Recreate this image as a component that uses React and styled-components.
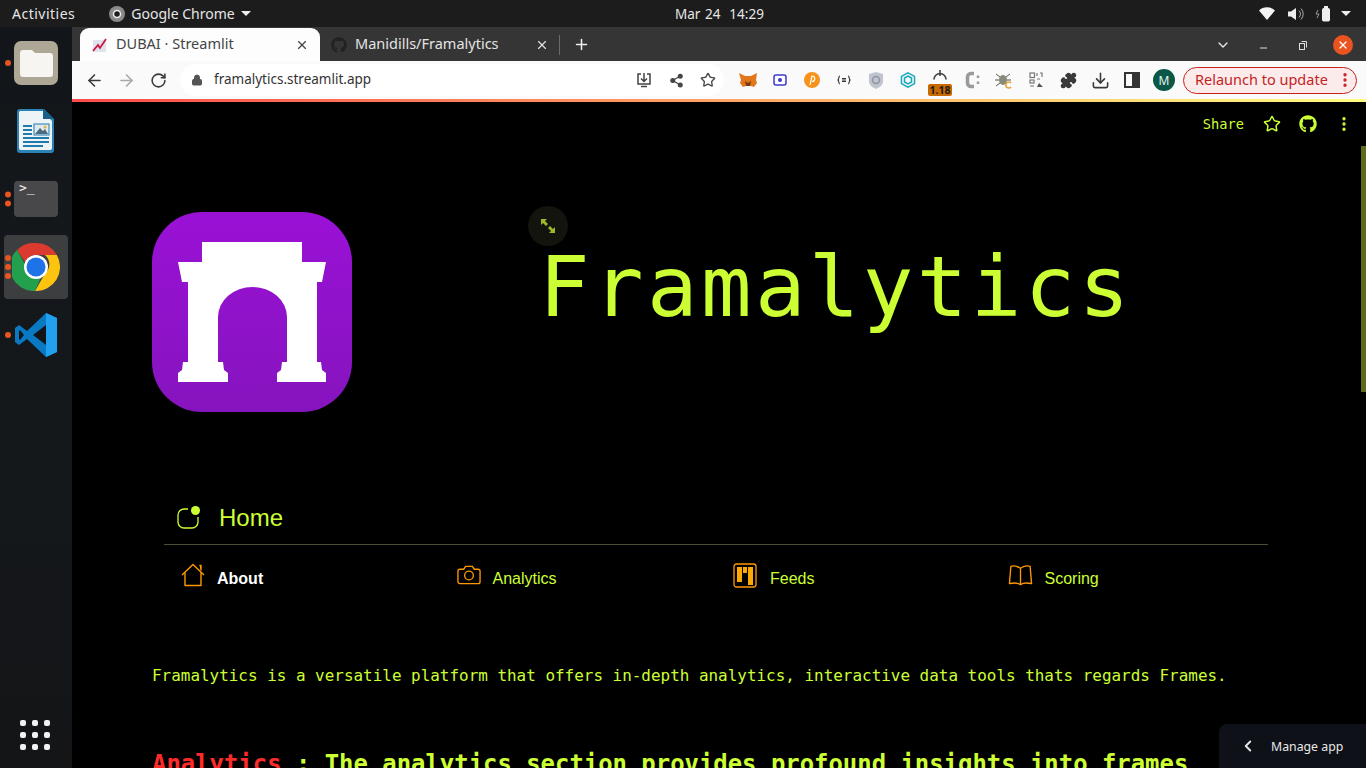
import React from "react";
import styled, { createGlobalStyle } from "styled-components";
import {
  ArrowLeft,
  ArrowRight,
  RotateCw,
  Lock,
  Share2,
  Star,
  Plus,
  X,
  ChevronDown,
  ChevronLeft,
  Download,
  Puzzle,
  MoreVertical,
} from "lucide-react";
import { FaGithub } from "react-icons/fa";

const lime = "#ccff33";
const amber = "#ff9900";
const uiFont = `"Noto Sans", "Open Sans", sans-serif`;
const monoFont = `"DejaVu Sans Mono", "Liberation Mono", monospace`;

const GlobalStyle = createGlobalStyle`
  html, body {
    margin: 0;
    padding: 0;
    height: 100%;
    overflow: hidden;
    background: #000;
  }
  * { box-sizing: border-box; }
`;

const Screen = styled.div`
  width: 1366px;
  height: 768px;
  display: flex;
  flex-direction: column;
  overflow: hidden;
  font-family: ${uiFont};
`;

const TopBar = styled.header`
  height: 27px;
  flex: none;
  display: flex;
  align-items: center;
  background: #1c1c1c;
  color: #e6e6e6;
  font-size: 14px;
`;

const TopLeft = styled.div`
  width: 675px;
  padding-left: 12px;
  display: flex;
  align-items: center;
`;

const Activities = styled.span`
  letter-spacing: 0.5px;
`;

const AppMenu = styled.div`
  margin-left: 34px;
  display: flex;
  align-items: center;
  gap: 6px;
`;

const Caret = styled.span`
  width: 0;
  height: 0;
  border-left: 5px solid transparent;
  border-right: 5px solid transparent;
  border-top: 5px solid #eee;
`;

const Clock = styled.div`
  word-spacing: 1px;
  font-size: 13.5px;
`;

const Tray = styled.div`
  margin-left: auto;
  margin-right: 15px;
  display: flex;
  align-items: center;
  gap: 10px;
`;

const WifiSlot = styled.span`
  display: flex;
  margin-right: 3px;
`;

const Desktop = styled.div`
  flex: 1;
  display: flex;
  min-height: 0;
`;

const Dock = styled.nav`
  width: 72px;
  flex: none;
  padding-top: 2px;
  display: flex;
  flex-direction: column;
  background: linear-gradient(180deg, #12161a, #15181b 60%, #131517);
`;

const DockItem = styled.div`
  position: relative;
  height: 68px;
  display: flex;
  align-items: center;
  justify-content: center;
`;

const DockHighlight = styled.div`
  width: 64px;
  height: 64px;
  border-radius: 4px;
  display: flex;
  align-items: center;
  justify-content: center;
  background: ${(p) => (p.$on ? "#3d3e40" : "transparent")};
`;

const DockDots = styled.div`
  position: absolute;
  left: 5px;
  top: 50%;
  transform: translateY(-50%);
  display: flex;
  flex-direction: column;
  gap: 3px;
`;

const Dot = styled.span`
  width: 6px;
  height: 6px;
  border-radius: 50%;
  background: #e95420;
`;

const FilesIcon = styled.div`
  width: 44px;
  height: 44px;
  border-radius: 7px;
  background: #aea795;
  display: flex;
  align-items: center;
  justify-content: center;
`;

const TerminalIcon = styled.div`
  width: 44px;
  height: 36px;
  border-radius: 4px;
  background: #48484a;
  color: #f2f2f2;
  padding: 0 5px;
  font: 13px/14px ${monoFont};
`;

const AppGrid = styled.div`
  margin: auto 0 18px 20px;
  width: 32px;
  display: grid;
  grid-template-columns: repeat(3, 6px);
  gap: 6px;
`;

const GridDot = styled.span`
  width: 6px;
  height: 6px;
  border-radius: 2px;
  background: #f2f2f2;
`;

const Browser = styled.div`
  flex: 1;
  min-width: 0;
  display: flex;
  flex-direction: column;
`;

const TabStrip = styled.div`
  height: 34px;
  flex: none;
  padding: 0 13px 0 8px;
  display: flex;
  align-items: flex-end;
  background: #353535;
`;

const Tab = styled.div`
  width: 240px;
  height: 33px;
  padding: 0 11px 0 ${(p) => (p.$active ? 12 : 11)}px;
  display: flex;
  align-items: center;
  gap: 8px;
  border-radius: 9px 9px 0 0;
  font-size: 14.5px;
  background: ${(p) => (p.$active ? "#fdfdfd" : "transparent")};
  color: ${(p) => (p.$active ? "#454545" : "#e4e4e4")};
`;

const TabTitle = styled.span`
  flex: 1;
  padding-bottom: 3px;
  white-space: nowrap;
`;

const TabDivider = styled.span`
  width: 1px;
  height: 20px;
  margin: 0 0 6px -1px;
  background: #6a6a6a;
`;

const NewTab = styled.div`
  width: 42px;
  height: 33px;
  display: flex;
  align-items: center;
  justify-content: center;
  color: #eee;
`;

const WindowControls = styled.div`
  margin-left: auto;
  height: 33px;
  display: flex;
  align-items: center;
  gap: 20px;
  color: #e8e8e8;
`;

const WinButton = styled.div`
  width: 20px;
  height: 20px;
  display: flex;
  align-items: center;
  justify-content: center;
`;

const CloseButton = styled.div`
  width: 20px;
  height: 20px;
  border-radius: 50%;
  background: #e95420;
  color: #fff;
  display: flex;
  align-items: center;
  justify-content: center;
`;

const Toolbar = styled.div`
  height: 38px;
  flex: none;
  display: flex;
  align-items: center;
  background: #fafafa;
  padding-left: 6px;
`;

const NavButton = styled.div`
  width: 32px;
  height: 32px;
  display: flex;
  align-items: center;
  justify-content: center;
  color: ${(p) => (p.$muted ? "#a8a8a8" : "#3a3a3a")};
`;

const Omnibox = styled.div`
  width: 544px;
  height: 32px;
  margin: 0 8px 0 6px;
  padding-left: 11px;
  border-radius: 16px;
  background: #fff;
  display: flex;
  align-items: center;
  color: #333;
  font-size: 13.5px;
`;

const Url = styled.span`
  margin-left: 11px;
  padding-bottom: 2px;
  flex: 1;
`;

const OmniAction = styled.div`
  width: 32px;
  display: flex;
  justify-content: center;
  color: #444;
`;

const Extension = styled.div`
  position: relative;
  width: 32px;
  height: 32px;
  flex: none;
  display: flex;
  align-items: center;
  justify-content: center;
  color: #3a3a3a;
`;

const GaugeDial = styled.span`
  display: flex;
  margin-bottom: 12px;
`;

const VersionBadge = styled.span`
  position: absolute;
  left: 4px;
  bottom: 0;
  width: 24px;
  height: 12px;
  border-radius: 2px;
  background: #c96a00;
  color: #1c1c1c;
  font-size: 10.5px;
  font-weight: 700;
  line-height: 12px;
  text-align: center;
`;

const Avatar = styled.div`
  width: 22px;
  height: 22px;
  border-radius: 50%;
  background: #0b5748;
  color: #e5f2ee;
  font-size: 12px;
  display: flex;
  align-items: center;
  justify-content: center;
`;

const Relaunch = styled.div`
  width: 174px;
  height: 27px;
  margin-left: 3px;
  padding: 0 2px 0 11px;
  border: 1px solid #c5221f;
  border-radius: 14px;
  background: #fbeceb;
  color: #c5221f;
  font-size: 14.5px;
  display: flex;
  align-items: center;
  justify-content: space-between;
  white-space: nowrap;
`;

const RelaunchLabel = styled.span`
  padding-bottom: 2px;
`;

const Decoration = styled.div`
  height: 3px;
  flex: none;
  background: linear-gradient(90deg, #ff4b4b, #fffd80);
`;

const Stage = styled.main`
  position: relative;
  flex: 1;
  min-height: 0;
  overflow: hidden;
  background: #000;
  color: ${lime};
`;

const AppHeader = styled.div`
  height: 44px;
  padding-right: 4px;
  display: flex;
  align-items: center;
  justify-content: flex-end;
`;

const HeaderAction = styled.div`
  width: 36px;
  display: flex;
  justify-content: center;
`;

const ShareLabel = styled.span`
  margin-right: 10px;
  font: 13.7px ${monoFont};
`;

const ScrollThumb = styled.div`
  position: absolute;
  top: 44px;
  right: 0;
  width: 5px;
  height: 246px;
  background: #5c6b1c;
`;

const Content = styled.div`
  padding: 66px 0 0 80px;
`;

const Hero = styled.section`
  display: flex;
  align-items: flex-start;
`;

const HeroTitle = styled.div`
  position: relative;
  margin-left: 187px;
`;

const Title = styled.h1`
  margin: 19px 0 0;
  font: 400 84px/112px ${monoFont};
  letter-spacing: 3.4px;
  color: ${lime};
`;

const ExpandButton = styled.div`
  position: absolute;
  left: -11px;
  top: -6px;
  width: 40px;
  height: 40px;
  border-radius: 50%;
  background: #12140d;
  display: flex;
  align-items: center;
  justify-content: center;
`;

const Menu = styled.nav`
  width: 1104px;
  margin: 82px 0 0 12px;
  font-family: "Liberation Sans", Arial, sans-serif;
`;

const MenuHeading = styled.div`
  height: 51px;
  padding: 0 0 2px 13px;
  display: flex;
  align-items: center;
  gap: 18px;
  font-size: 24px;
  border-bottom: 1px solid #4c4f33;
`;

const MenuRow = styled.div`
  height: 66px;
  display: grid;
  grid-template-columns: repeat(4, 275.5px);
`;

const MenuItem = styled.div`
  padding-left: 17px;
  display: flex;
  align-items: center;
  gap: 12px;
  font-size: 16px;
  font-weight: ${(p) => (p.$active ? 700 : 400)};
  color: ${(p) => (p.$active ? "#fff" : lime)};
`;

const MenuIcon = styled.span`
  display: flex;
  padding-bottom: 6px;
`;

const MenuLabel = styled.span`
  padding-top: 2px;
`;

const Intro = styled.p`
  margin: 53px 0 0;
  font: 15.95px/24px ${monoFont};
  white-space: nowrap;
`;

const SectionLine = styled.h2`
  margin: 59px 0 0;
  font: 700 23.92px/34px ${monoFont};
  white-space: nowrap;
`;

const RedWord = styled.span`
  color: #ff2b2b;
`;

const ManageApp = styled.div`
  position: absolute;
  right: 0;
  bottom: 0;
  width: 147px;
  height: 44px;
  padding-left: 20px;
  border-top-left-radius: 8px;
  background: #0e1117;
  color: #e8e8e8;
  font-size: 12.3px;
  display: flex;
  align-items: center;
  gap: 14px;
`;

const ChromeLogo = ({ size = 48 }) => (
  <svg width={size} height={size} viewBox="0 0 48 48">
    <path d="M24 0a24 24 0 0 1 20.8 12H24a12 12 0 0 0-11 7L5 7A24 24 0 0 1 24 0z" fill="#db3a2e" />
    <path d="M44.8 12A24 24 0 0 1 23 48l10-17.5a12 12 0 0 0 0-18.5z" fill="#fcc30f" />
    <path d="M5 7l9 16a12 12 0 0 0 15 11.5L23 48A24 24 0 0 1 5 7z" fill="#23a04e" />
    <circle cx="24" cy="24" r="12" fill="#fff" />
    <circle cx="24" cy="24" r="9.5" fill="#1f73e8" />
  </svg>
);

const WriterLogo = () => (
  <svg width="38" height="46" viewBox="0 0 38 46">
    <path d="M3 1h24l10 10v31a3 3 0 0 1-3 3H3a3 3 0 0 1-3-3V4a3 3 0 0 1 3-3z" fill="#2a82b5" />
    <path d="M3 3h23l9 10v27a2 2 0 0 1-2 2H4a2 2 0 0 1-2-2V4z" fill="#eef3f6" />
    <path d="M26 1l11 10H26z" fill="#17608c" />
    <g fill="#1f7bad">
      <rect x="6" y="17" width="9" height="2" />
      <rect x="6" y="21" width="9" height="2" />
      <rect x="6" y="25" width="9" height="2" />
      <rect x="6" y="29" width="26" height="2" />
      <rect x="6" y="33" width="26" height="2" />
      <rect x="6" y="37" width="20" height="2" />
    </g>
    <rect x="17" y="16" width="15" height="11" fill="#dfe9ee" stroke="#1f7bad" />
    <path d="M18 26l5-6 3 3 2-2 3 5z" fill="#4b6b80" />
    <circle cx="28" cy="19" r="1.5" fill="#e4b43c" />
  </svg>
);

const VsCodeLogo = () => (
  <svg width="42" height="44" viewBox="0 0 42 44">
    <path d="M31 0l11 5v34l-11 5L12 26 4 32l-4-3v-14l4-3 8 6z" fill="#0a79c4" />
    <path d="M31 0l11 5v34l-11 5z" fill="#21a0ee" />
    <path d="M31 12L18 22l13 10z" fill="#12161a" />
    <path d="M5 17l4 5-4 5-1-1v-8z" fill="#12161a" />
  </svg>
);

const ArchLogo = () => (
  <svg width="200" height="200" viewBox="0 0 200 200">
    <defs>
      <linearGradient id="logoFill" x1="0" y1="0" x2="0" y2="1">
        <stop offset="0" stopColor="#9a11d6" />
        <stop offset="1" stopColor="#8614be" />
      </linearGradient>
    </defs>
    <rect width="200" height="200" rx="50" fill="url(#logoFill)" />
    <path
      d="M50 30H150V50H174L170 70H165V150H169L170 158L174 161V170H125V161L129 158L130 150H135V105A34.500 30 0 0 0 66 105V150H71L72 158L76 161V170H26V161L30 158L31 150H36V70H30L26 50H50Z"
      fill="#fff"
    />
  </svg>
);

const HomeBadge = () => (
  <svg width="24" height="24" viewBox="0 0 24 24" fill="none">
    <path d="M11 3H7a6 6 0 0 0-6 6v7a6 6 0 0 0 6 6h8a6 6 0 0 0 6-6v-5" stroke={lime} strokeWidth="1.3" />
    <circle cx="18.5" cy="4.5" r="4.5" fill={lime} />
  </svg>
);

const HouseIcon = () => (
  <svg width="24" height="24" viewBox="0 0 24 24" fill="none" stroke={amber} strokeWidth="1.4" strokeLinejoin="round">
    <path d="M1 12L12 1.500 23 12" />
    <path d="M4 9.500V22.500H20V9.500" />
    <path d="M18.500 2.500h1.500v5" fill={amber} />
  </svg>
);

const CameraIcon = () => (
  <svg width="24" height="20" viewBox="0 0 25 20" fill="none" stroke={amber} strokeWidth="1.4">
    <path d="M3 4h4l2-3h7l2 3h4a2 2 0 0 1 2 2v11a2 2 0 0 1-2 2H3a2 2 0 0 1-2-2V6a2 2 0 0 1 2-2z" />
    <circle cx="12.5" cy="10.5" r="4.500" />
  </svg>
);

const BoardIcon = () => (
  <svg width="26" height="25" viewBox="0 0 26 25" fill="none">
    <rect x="2" y="1" width="22" height="23" rx="2.500" stroke={amber} strokeWidth="1.3" />
    <path d="M5 4h5v15H5zM11 4h4v6h-4zM16 4h5v18h-5z" fill="#ffaa00" />
  </svg>
);

const BookIcon = () => (
  <svg width="25" height="22" viewBox="0 0 26 22" fill="none" stroke={amber} strokeWidth="1.4" strokeLinejoin="round">
    <path d="M13 4C10 2 6 1 3 2L1.500 20C6 19 10 19 13 21C16 19 20 19 24.500 20L23 2C20 1 16 2 13 4Z" />
    <path d="M13 4V21" />
  </svg>
);

const Fox = () => (
  <svg width="18" height="16" viewBox="0 0 18 16">
    <path d="M0 1l6 3h6l6-3-1 7 1 3-3 4-3-1H7l-3 1-3-4 1-3z" fill="#e2761b" />
    <path d="M6 9l3 2 3-2-1 5H7z" fill="#763d16" />
  </svg>
);

const ExtensionIcons = () => (
  <>
    <Extension><Fox /></Extension>
    <Extension>
      <svg width="14" height="12" viewBox="0 0 14 12">
        <rect x="1" y="1" width="12" height="10" rx="2" fill="#fff" stroke="#3d3ac9" strokeWidth="1.5" />
        <circle cx="7" cy="6" r="2" fill="#3d3ac9" />
      </svg>
    </Extension>
    <Extension>
      <svg width="16" height="16" viewBox="0 0 16 16" fill="none">
        <circle cx="8" cy="8" r="8" fill="#f7931a" />
        <path d="M6 13l2-9a2.500 2.500 0 1 1 0 5.500" stroke="#fff" strokeWidth="1.2" />
      </svg>
    </Extension>
    <Extension>
      <svg width="14" height="10" viewBox="0 0 14 10" fill="none" stroke="#333" strokeWidth="1.1">
        <path d="M3 1C1.500 1 2 4 1 5c1 1 .5 4 2 4M11 1c1.500 0 1 3 2 4-1 1-.5 4-2 4M5 3.500h4M5 5h4M5 6.500h4" />
      </svg>
    </Extension>
    <Extension>
      <svg width="14" height="17" viewBox="0 0 14 17">
        <path d="M7 0l7 2v7c0 4-3 6-7 8-4-2-7-4-7-8V2z" fill="#c0c4cf" />
        <circle cx="7" cy="8" r="3.5" fill="none" stroke="#8f94a3" strokeWidth="1.5" />
      </svg>
    </Extension>
    <Extension>
      <svg width="16" height="16" viewBox="0 0 16 16" fill="none" stroke="#17a8bb" strokeWidth="1.5">
        <path d="M8 .8l6.500 3.600v7.200L8 15.200l-6.500-3.600V4.400z" />
        <path d="M8 4l3.500 2v4L8 12l-3.500-2V6z" />
      </svg>
    </Extension>
    <Extension>
      <GaugeDial>
        <svg width="16" height="11" viewBox="0 0 16 11" fill="none" stroke="#444" strokeWidth="1.6">
          <path d="M2 10.500a6 6 0 0 1 12 0M8 1v6" />
        </svg>
      </GaugeDial>
      <VersionBadge>1.18</VersionBadge>
    </Extension>
    <Extension>
      <svg width="15" height="18" viewBox="0 0 15 18" fill="none" stroke="#9a9a9a">
        <path d="M9 2.500H6A3.500 3.500 0 0 0 2.500 6v6A3.500 3.500 0 0 0 6 15.500h3" strokeWidth="3.5" />
        <path d="M13 4.500v2.500M13 10.500v2.500" strokeWidth="2.5" />
      </svg>
    </Extension>
    <Extension>
      <svg width="18" height="18" viewBox="0 0 18 18" fill="none">
        <ellipse cx="8" cy="9" rx="4" ry="5" fill="#8a8a7a" />
        <path d="M1 3l4 3M15 3l-4 3M0 9h4M16 9h-4M1 15l4-3" stroke="#555" />
        <path d="M16 12a3 3 0 1 0 0 4" stroke="#e3a63a" strokeWidth="1.6" />
      </svg>
    </Extension>
    <Extension>
      <svg width="14" height="16" viewBox="0 0 14 16" fill="none" stroke="#777" strokeWidth="1.2">
        <rect x="1" y="1" width="4.500" height="4.500" />
        <rect x="1" y="8" width="4" height="3" />
        <path d="M8 1v3M11 1h2v4M8 7h3M1 14h4" />
        <path d="M8 15l2-4 4 4z" fill="#555" stroke="none" />
      </svg>
    </Extension>
    <Extension><Puzzle size={17} fill="#3a3a3a" /></Extension>
    <Extension><Download size={19} strokeWidth={2} /></Extension>
    <Extension>
      <svg width="16" height="16" viewBox="0 0 16 16">
        <path d="M0 0h16v16H0zM2 2v12h6V2z" fill="#333" fillRule="evenodd" />
      </svg>
    </Extension>
  </>
);

const menuItems = [
  { label: "About", icon: <HouseIcon />, active: true },
  { label: "Analytics", icon: <CameraIcon /> },
  { label: "Feeds", icon: <BoardIcon /> },
  { label: "Scoring", icon: <BookIcon /> },
];

const dockDots = (n) => (
  <DockDots>
    {Array.from({ length: n }, (_, i) => <Dot key={i} />)}
  </DockDots>
);

const App = () => {
  return (
    <Screen>
      <GlobalStyle />
      <TopBar>
        <TopLeft>
          <Activities>Activities</Activities>
          <AppMenu>
            <svg width="16" height="16" viewBox="0 0 16 16">
              <circle cx="8" cy="8" r="8" fill="#8a8a8a" />
              <circle cx="8" cy="8" r="3.5" fill="#1c1c1c" stroke="#eee" strokeWidth="1.5" />
            </svg>
            Google Chrome
            <Caret />
          </AppMenu>
        </TopLeft>
        <Clock>Mar 24&nbsp;&nbsp;14:29</Clock>
        <Tray>
          <WifiSlot>
            <svg width="16" height="13" viewBox="0 0 16 13">
              <path d="M0 3.500C4 -.8 12 -.8 16 3.500L8 13z" fill="#f4f4f4" />
            </svg>
          </WifiSlot>
          <svg width="16" height="14" viewBox="0 0 16 14" fill="none">
            <path d="M0 4.500h3L8 1v12L3 9.500H0z" fill="#eee" />
            <path d="M11 3.500a5 5 0 0 1 0 7M13 1.500a8 8 0 0 1 0 11" stroke="#aaa" />
          </svg>
          <svg width="17" height="16" viewBox="0 0 17 16" fill="none">
            <path d="M4 4L2 8h3l-2 4" stroke="#999" />
            <rect x="8.500" y="2.500" width="7" height="12.500" rx="1" fill="#eee" stroke="#eee" />
            <rect x="10" y="0" width="4" height="2" fill="#eee" />
          </svg>
          <Caret />
        </Tray>
      </TopBar>
      <Desktop>
        <Dock>
          <DockItem>
            {dockDots(1)}
            <FilesIcon>
              <svg width="33" height="27" viewBox="0 0 33 27">
                <path d="M3 0h9l3 3h15a3 3 0 0 1 3 3v18a3 3 0 0 1-3 3H3a3 3 0 0 1-3-3V3a3 3 0 0 1 3-3z" fill="#f6f5f2" />
              </svg>
            </FilesIcon>
          </DockItem>
          <DockItem><WriterLogo /></DockItem>
          <DockItem>
            {dockDots(2)}
            <TerminalIcon>&gt;_</TerminalIcon>
          </DockItem>
          <DockItem>
            <DockHighlight $on><ChromeLogo /></DockHighlight>
            {dockDots(3)}
          </DockItem>
          <DockItem>
            {dockDots(1)}
            <VsCodeLogo />
          </DockItem>
          <AppGrid>
            {Array.from({ length: 9 }, (_, i) => <GridDot key={i} />)}
          </AppGrid>
        </Dock>
        <Browser>
          <TabStrip>
            <Tab $active>
              <svg width="16" height="16" viewBox="0 0 16 16" fill="none">
                <rect x="1" y="3" width="13" height="12" fill="#dfe3ee" />
                <path d="M1 14l5-6 2 3 6-9" stroke="#d1173a" strokeWidth="1.8" />
              </svg>
              <TabTitle>DUBAI · Streamlit</TabTitle>
              <X size={14} color="#444" />
            </Tab>
            <Tab>
              <FaGithub size={16} color="#222" />
              <TabTitle>Manidills/Framalytics</TabTitle>
              <X size={14} color="#ddd" />
            </Tab>
            <TabDivider />
            <NewTab><Plus size={17} strokeWidth={2.2} /></NewTab>
            <WindowControls>
              <WinButton><ChevronDown size={16} /></WinButton>
              <WinButton>
                <svg width="10" height="10" viewBox="0 0 10 10"><path d="M2 8h7" stroke="#ddd" /></svg>
              </WinButton>
              <WinButton>
                <svg width="10" height="10" viewBox="0 0 10 10" fill="none" stroke="#ddd">
                  <rect x="1.5" y="3.5" width="5" height="6" />
                  <path d="M3.500 1.500h5v6" />
                </svg>
              </WinButton>
              <CloseButton><X size={12} strokeWidth={2.5} /></CloseButton>
            </WindowControls>
          </TabStrip>
          <Toolbar>
            <NavButton><ArrowLeft size={19} /></NavButton>
            <NavButton $muted><ArrowRight size={19} /></NavButton>
            <NavButton><RotateCw size={17} strokeWidth={2.2} /></NavButton>
            <Omnibox>
              <Lock size={12} fill="#555" color="#555" />
              <Url>framalytics.streamlit.app</Url>
              <OmniAction>
                <svg width="16" height="16" viewBox="0 0 16 16" fill="none" stroke="#444" strokeWidth="1.5">
                  <path d="M5 2H2v10h12V2h-3M8 1v8M5 6.500L8 9.500l3-3M5 14.500h6" />
                </svg>
              </OmniAction>
              <OmniAction><Share2 size={15} fill="#444" /></OmniAction>
              <OmniAction><Star size={16} /></OmniAction>
            </Omnibox>
            <ExtensionIcons />
            <Extension><Avatar>M</Avatar></Extension>
            <Relaunch>
              <RelaunchLabel>Relaunch to update</RelaunchLabel>
              <MoreVertical size={18} strokeWidth={2.5} />
            </Relaunch>
          </Toolbar>
          <Decoration />
          <Stage>
            <AppHeader>
              <ShareLabel>Share</ShareLabel>
              <HeaderAction><Star size={18} strokeWidth={2} /></HeaderAction>
              <HeaderAction><FaGithub size={18} /></HeaderAction>
              <HeaderAction><MoreVertical size={18} strokeWidth={2.5} /></HeaderAction>
            </AppHeader>
            <ScrollThumb />
            <Content>
              <Hero>
                <ArchLogo />
                <HeroTitle>
                  <ExpandButton>
                    <svg width="16" height="16" viewBox="0 0 16 16" fill="#9ab82a">
                      <path d="M1 1h6L5 3l3 3-2 2-3-3-2 2zM15 15H9l2-2-3-3 2-2 3 3 2-2z" />
                    </svg>
                  </ExpandButton>
                  <Title>Framalytics</Title>
                </HeroTitle>
              </Hero>
              <Menu>
                <MenuHeading>
                  <HomeBadge />
                  Home
                </MenuHeading>
                <MenuRow>
                  {menuItems.map((item) => (
                    <MenuItem key={item.label} $active={item.active}>
                      <MenuIcon>{item.icon}</MenuIcon>
                      <MenuLabel>{item.label}</MenuLabel>
                    </MenuItem>
                  ))}
                </MenuRow>
              </Menu>
              <Intro>
                Framalytics is a versatile platform that offers in-depth analytics, interactive data tools thats regards Frames.
              </Intro>
              <SectionLine>
                <RedWord>Analytics</RedWord> : The analytics section provides profound insights into frames
              </SectionLine>
            </Content>
            <ManageApp>
              <ChevronLeft size={18} strokeWidth={2.5} />
              Manage app
            </ManageApp>
          </Stage>
        </Browser>
      </Desktop>
    </Screen>
  );
};

export default App;
